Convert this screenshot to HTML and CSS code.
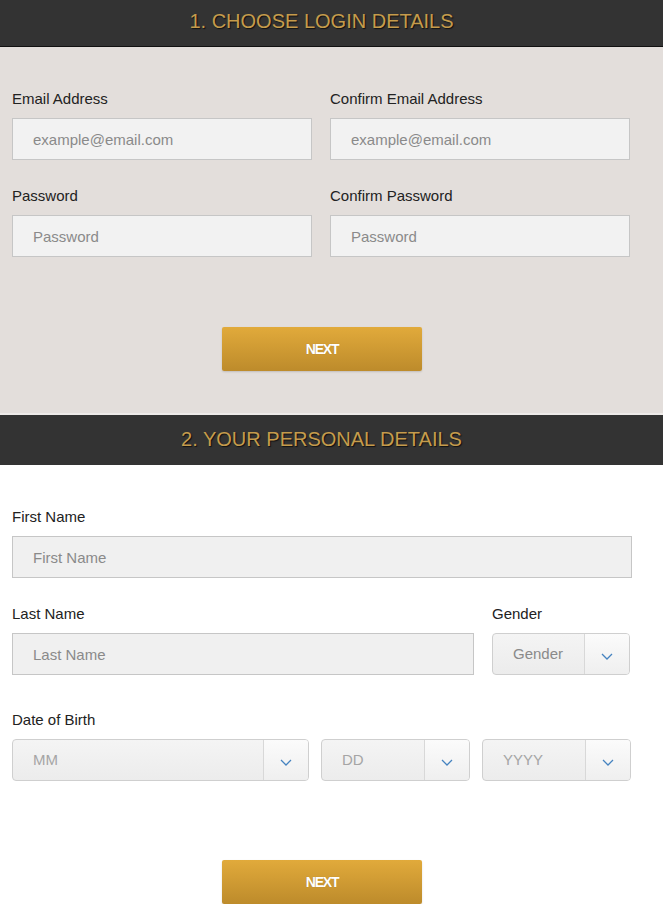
FILE: index.html
```html
<!doctype html>
<html lang="en">
    <head>
        <meta charset="UTF-8" />
        <meta name="viewport" content="width=device-width, initial-scale=1.0" />
        <title>Register</title>
        <link rel="stylesheet" href="styles.css">
    </head>
    <body>
        <!-- Step 1 -->
        <div class="step-title step-title-first">1. Choose Login Details</div>
        <section class="step step-login">
            <div class="row row-halves">
                <div class="field">
                    <label>Email Address</label>
                    <input type="text" placeholder="example@email.com" />
                </div>
                <div class="field">
                    <label>Confirm Email Address</label>
                    <input type="text" placeholder="example@email.com" />
                </div>
            </div>
            <div class="row row-halves">
                <div class="field">
                    <label>Password</label>
                    <input type="text" placeholder="Password" />
                </div>
                <div class="field">
                    <label>Confirm Password</label>
                    <input type="text" placeholder="Password" />
                </div>
            </div>
            <div class="actions">
                <button class="btn-next">NEXT</button>
            </div>
        </section>

        <!-- Step 2 -->
        <div class="step-title">2. Your Personal Details</div>
        <section class="step step-personal">
            <div class="row row-full">
                <div class="field">
                    <label>First Name</label>
                    <input type="text" placeholder="First Name" />
                </div>
            </div>
            <div class="row row-name">
                <div class="field">
                    <label>Last Name</label>
                    <input type="text" placeholder="Last Name" />
                </div>
                <div class="field">
                    <label>Gender</label>
                    <div class="select">
                        <span class="select-value">Gender</span>
                        <span class="select-arrow">
                            <svg width="12" height="7" viewBox="0 0 12 7"><path d="M1 1 L6 6 L11 1" fill="none" stroke="#4583c0" stroke-width="1.3" /></svg>
                        </span>
                    </div>
                </div>
            </div>
            <div class="row row-dob">
                <div class="field field-span">
                    <label>Date of Birth</label>
                </div>
                <div class="select">
                    <span class="select-value light">MM</span>
                    <span class="select-arrow">
                        <svg width="12" height="7" viewBox="0 0 12 7"><path d="M1 1 L6 6 L11 1" fill="none" stroke="#4583c0" stroke-width="1.3" /></svg>
                    </span>
                </div>
                <div class="select">
                    <span class="select-value light">DD</span>
                    <span class="select-arrow">
                        <svg width="12" height="7" viewBox="0 0 12 7"><path d="M1 1 L6 6 L11 1" fill="none" stroke="#4583c0" stroke-width="1.3" /></svg>
                    </span>
                </div>
                <div class="select">
                    <span class="select-value light">YYYY</span>
                    <span class="select-arrow">
                        <svg width="12" height="7" viewBox="0 0 12 7"><path d="M1 1 L6 6 L11 1" fill="none" stroke="#4583c0" stroke-width="1.3" /></svg>
                    </span>
                </div>
            </div>
            <div class="actions actions-last">
                <button class="btn-next">NEXT</button>
            </div>
        </section>
    </body>
</html>
```

FILE: styles.css
```css
html {
    height: 100%;
}

body {
    margin: 0;
    padding: 0;
    background: #ffffff;
    font-family: "Liberation Sans", Arial, sans-serif;
    color: #222222;
    overflow: hidden;
}

.step-title {
    height: 50px;
    line-height: 48px;
    padding-right: 20px;
    background: #333333;
    color: #c59c4c;
    font-size: 20px;
    text-align: center;
    text-transform: uppercase;
    text-shadow: 1px 1px 1px #111111;
}

.step-title-first {
    height: 46px;
    line-height: 42px;
    border-bottom: 1px solid #111111;
}

.step {
    padding: 42px 12px 0 12px;
}

.step-login {
    background: #e3dedb;
    padding-bottom: 42px;
    border-bottom: 2px solid #eeebe9;
}

.row {
    display: grid;
    column-gap: 18px;
    margin-bottom: 26px;
}

.row-halves {
    grid-template-columns: 300px 300px;
}

.row-full {
    grid-template-columns: 620px;
}

.row-name {
    grid-template-columns: 462px 138px;
}

.row-dob {
    grid-template-columns: 297px 149px 149px;
    column-gap: 12px;
    margin-top: 35px;
}

.field-span {
    grid-column: 1 / -1;
}

.field label {
    display: block;
    font-size: 15px;
    line-height: 18px;
    padding-top: 1px;
    margin-bottom: 10px;
}

.field input {
    display: block;
    box-sizing: border-box;
    width: 100%;
    height: 42px;
    margin: 0;
    padding: 0 20px;
    border: 1px solid #c6c6c6;
    background: #f2f2f2;
    font-family: "Liberation Sans", Arial, sans-serif;
    font-size: 15px;
    color: #333333;
    outline: none;
}

.step-personal .field input {
    background: #f0f0f0;
}

.field input::placeholder {
    color: #8a8a8a;
}

.select {
    display: flex;
    box-sizing: border-box;
    height: 42px;
    border: 1px solid #cfcfcf;
    border-radius: 4px;
    background: linear-gradient(#f4f4f4, #ececec);
    overflow: hidden;
}

.select-value {
    flex: 1;
    padding-left: 20px;
    line-height: 40px;
    font-size: 15px;
    color: #8a8a8a;
}

.select-value.light {
    color: #a5a5a5;
}

.select-arrow {
    width: 45px;
    display: flex;
    align-items: center;
    justify-content: center;
    padding-top: 5px;
    box-sizing: border-box;
    border-left: 1px solid #d8d8d8;
    background: linear-gradient(#fbfbfb, #efefef);
}

.actions {
    display: flex;
    justify-content: flex-start;
    padding-top: 44px;
    padding-left: 210px;
}

.actions-last {
    padding-top: 53px;
}

.btn-next {
    width: 200px;
    height: 44px;
    border: none;
    border-radius: 2px;
    background: linear-gradient(#e1aa3b, #bd8b2b);
    box-shadow: 0 1px 2px rgba(0, 0, 0, 0.15);
    color: #ffffff;
    font-family: "Liberation Sans", Arial, sans-serif;
    font-size: 14px;
    font-weight: bold;
    letter-spacing: -1.2px;
    text-shadow: 0 0 1px rgba(0, 0, 0, 0.2);
    cursor: pointer;
}
```
